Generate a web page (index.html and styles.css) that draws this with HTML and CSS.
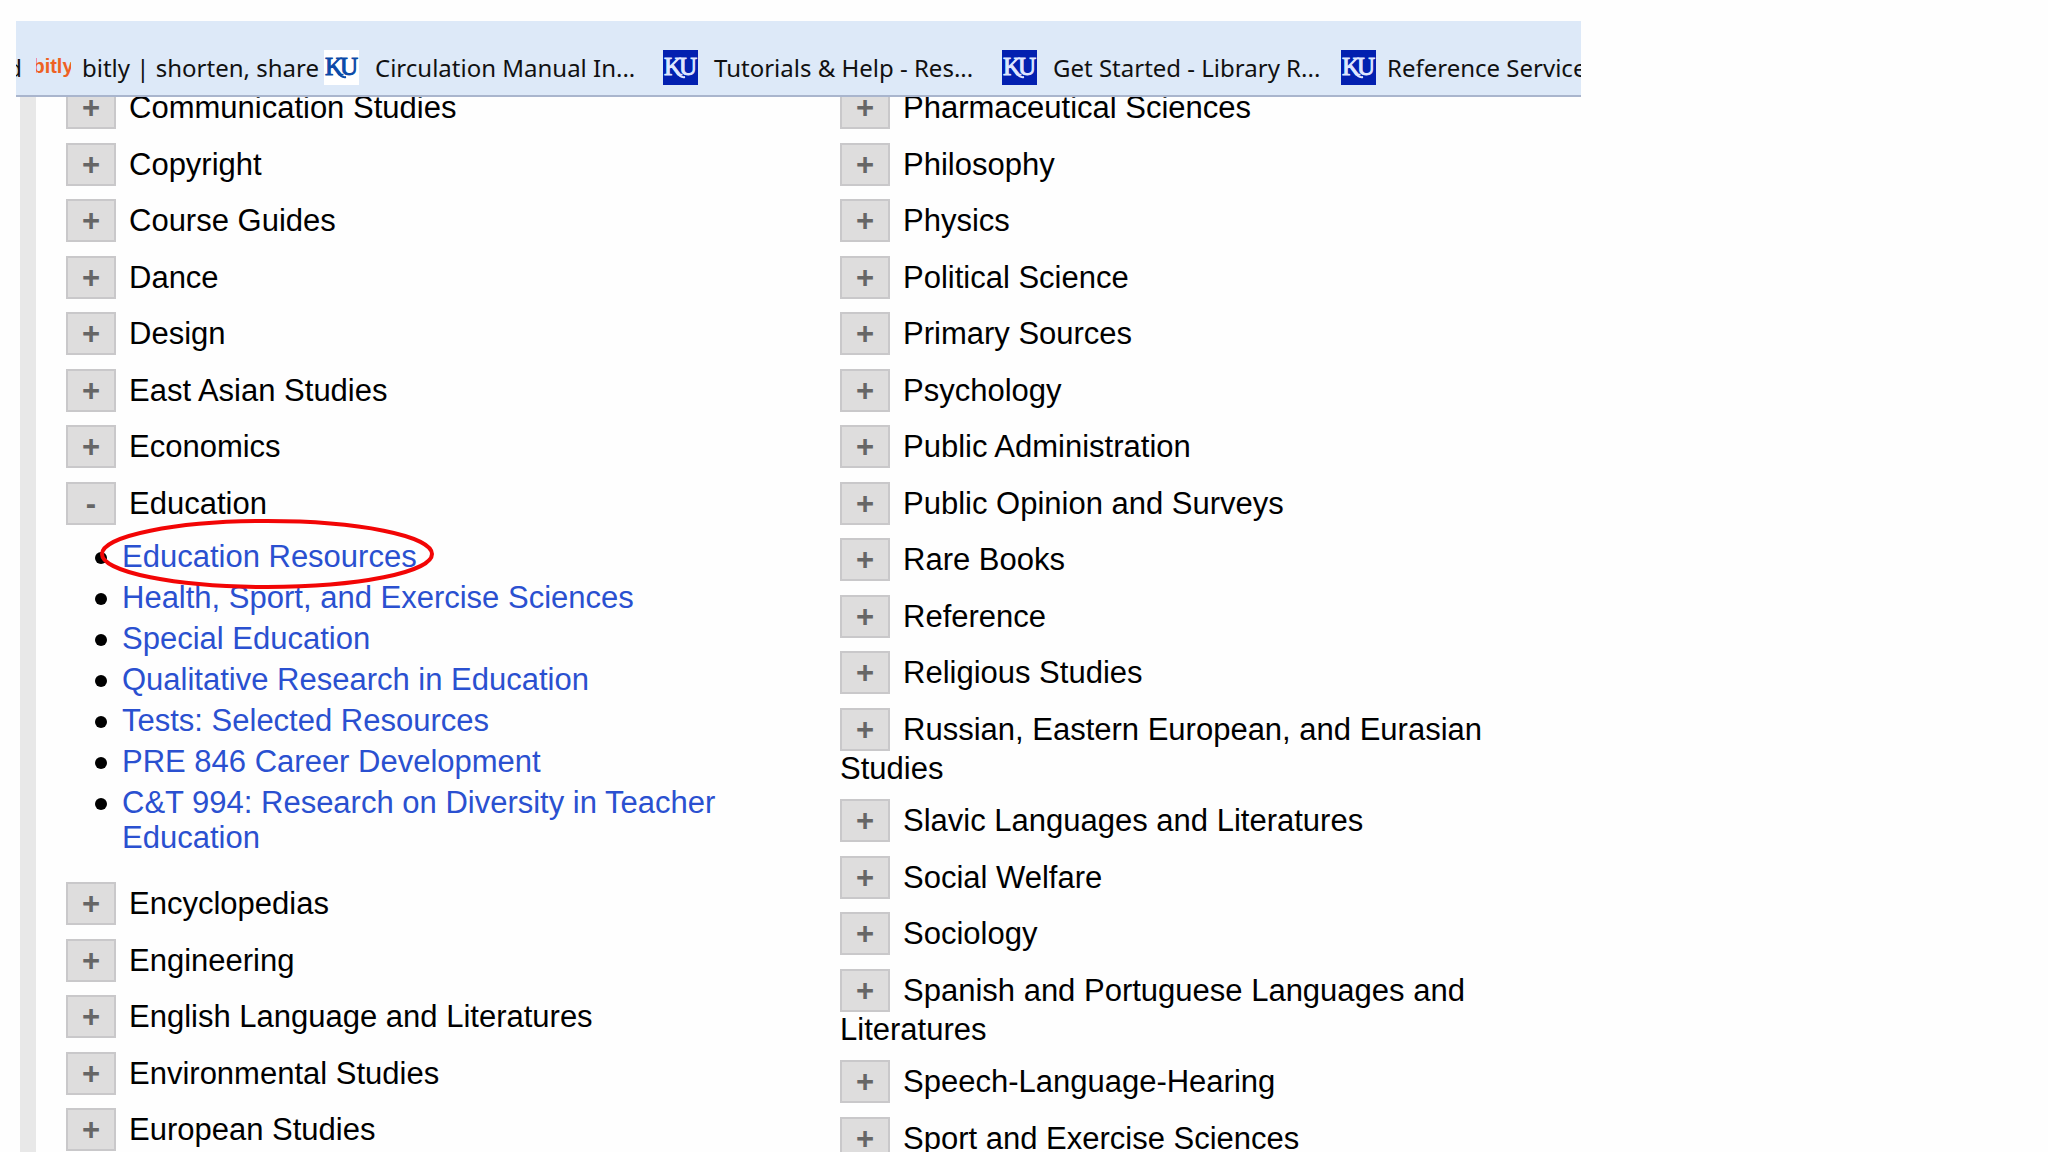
FILE: index.html
```
<!DOCTYPE html>
<html lang="en">
<head>
  <meta charset="UTF-8">
  <title>Research Guides by Subject</title>
  <link rel="stylesheet" href="styles.css">
</head>
<body>
  <div class="window">
    <nav class="bookmarks">
      <a class="bookmark cut" href="#">d</a>
      <a class="bookmark short" href="#">
        <svg class="favicon" viewBox="0 0 35 35" aria-hidden="true">
          <text class="bitly" x="17" y="23" text-anchor="middle">bitly</text>
        </svg>
        <span>bitly | shorten, share</span>
      </a>
      <a class="bookmark" href="#">
        <svg class="favicon" viewBox="0 0 35 35" aria-hidden="true">
          <rect width="35" height="35" fill="#fff"/>
          <g fill="#0a4aa8" stroke="#0a4aa8">
            <text class="ku" x="1" y="25">K</text>
            <text class="ku" x="16" y="25">U</text>
            <path d="M14 22 Q17 28 22 27" fill="none" stroke-width="2"/>
          </g>
        </svg>
        <span>Circulation Manual In...</span>
      </a>
      <a class="bookmark" href="#">
        <svg class="favicon" viewBox="0 0 35 35" aria-hidden="true">
          <rect width="35" height="35" fill="#0320b0"/>
          <g fill="#dfe6ff" stroke="#dfe6ff">
            <text class="ku" x="1" y="25">K</text>
            <text class="ku" x="16" y="25">U</text>
            <path d="M14 22 Q17 28 22 27" fill="none" stroke-width="2"/>
          </g>
        </svg>
        <span>Tutorials &amp; Help - Res...</span>
      </a>
      <a class="bookmark" href="#">
        <svg class="favicon" viewBox="0 0 35 35" aria-hidden="true">
          <rect width="35" height="35" fill="#0320b0"/>
          <g fill="#dfe6ff" stroke="#dfe6ff">
            <text class="ku" x="1" y="25">K</text>
            <text class="ku" x="16" y="25">U</text>
            <path d="M14 22 Q17 28 22 27" fill="none" stroke-width="2"/>
          </g>
        </svg>
        <span>Get Started - Library R...</span>
      </a>
      <a class="bookmark short" href="#">
        <svg class="favicon" viewBox="0 0 35 35" aria-hidden="true">
          <rect width="35" height="35" fill="#0320b0"/>
          <g fill="#dfe6ff" stroke="#dfe6ff">
            <text class="ku" x="1" y="25">K</text>
            <text class="ku" x="16" y="25">U</text>
            <path d="M14 22 Q17 28 22 27" fill="none" stroke-width="2"/>
          </g>
        </svg>
        <span>Reference Service</span>
      </a>
    </nav>

    <main class="guides">
      <ul class="subjects">
        <li><button class="toggle">+</button>Communication Studies</li>
        <li><button class="toggle">+</button>Copyright</li>
        <li><button class="toggle">+</button>Course Guides</li>
        <li><button class="toggle">+</button>Dance</li>
        <li><button class="toggle">+</button>Design</li>
        <li><button class="toggle">+</button>East Asian Studies</li>
        <li><button class="toggle">+</button>Economics</li>
        <li>
          <button class="toggle">-</button>Education
          <ul class="links">
            <li class="marked">
              <a href="#">Education Resources</a>
              <svg class="circle" viewBox="0 0 335 70" aria-hidden="true">
                <ellipse cx="167" cy="35" rx="165" ry="33" fill="none" stroke="#f20505" stroke-width="4"/>
              </svg>
            </li>
            <li><a href="#">Health, Sport, and Exercise Sciences</a></li>
            <li><a href="#">Special Education</a></li>
            <li><a href="#">Qualitative Research in Education</a></li>
            <li><a href="#">Tests: Selected Resources</a></li>
            <li><a href="#">PRE 846 Career Development</a></li>
            <li><a href="#">C&amp;T 994: Research on Diversity in Teacher Education</a></li>
          </ul>
        </li>
        <li><button class="toggle">+</button>Encyclopedias</li>
        <li><button class="toggle">+</button>Engineering</li>
        <li><button class="toggle">+</button>English Language and Literatures</li>
        <li><button class="toggle">+</button>Environmental Studies</li>
        <li><button class="toggle">+</button>European Studies</li>
      </ul>

      <ul class="subjects">
        <li><button class="toggle">+</button>Pharmaceutical Sciences</li>
        <li><button class="toggle">+</button>Philosophy</li>
        <li><button class="toggle">+</button>Physics</li>
        <li><button class="toggle">+</button>Political Science</li>
        <li><button class="toggle">+</button>Primary Sources</li>
        <li><button class="toggle">+</button>Psychology</li>
        <li><button class="toggle">+</button>Public Administration</li>
        <li><button class="toggle">+</button>Public Opinion and Surveys</li>
        <li><button class="toggle">+</button>Rare Books</li>
        <li><button class="toggle">+</button>Reference</li>
        <li><button class="toggle">+</button>Religious Studies</li>
        <li><button class="toggle">+</button>Russian, Eastern European, and Eurasian Studies</li>
        <li><button class="toggle">+</button>Slavic Languages and Literatures</li>
        <li><button class="toggle">+</button>Social Welfare</li>
        <li><button class="toggle">+</button>Sociology</li>
        <li><button class="toggle">+</button>Spanish and Portuguese Languages and Literatures</li>
        <li><button class="toggle">+</button>Speech-Language-Hearing</li>
        <li><button class="toggle">+</button>Sport and Exercise Sciences</li>
      </ul>
    </main>
  </div>
</body>
</html>
```

FILE: styles.css
```
* {
  box-sizing: border-box;
}
body {
  margin: 0;
  background: #fefefe;
  color: #000;
  font-family: "Liberation Sans", Arial, sans-serif;
  font-size: 31px;
  line-height: 35px;
}
ul {
  list-style: none;
  margin: 0;
  padding: 0;
}
.window {
  display: flex;
  flex-direction: column;
  max-width: 1581px;
  height: 100vh;
  padding: 21px 0 0 16px;
  overflow: hidden;
}

/* bookmarks bar */
.bookmarks {
  position: relative;
  z-index: 1;
  display: flex;
  flex-shrink: 0;
  height: 76px;
  padding-top: 18px;
  overflow: hidden;
  background: #dde9f8;
  border-bottom: 2px solid #a9b5cd;
}
.bookmark {
  display: flex;
  flex: 0 0 339px;
  align-items: center;
  gap: 16px;
  color: #111;
  font-family: "Noto Sans", "Open Sans", sans-serif;
  font-size: 24px;
  text-decoration: none;
  white-space: nowrap;
}
.bookmark.short {
  flex-basis: 288px;
  gap: 11px;
}
.bookmark.cut {
  flex-basis: 20px;
  min-width: 0;
  justify-content: flex-end;
  padding-right: 14px;
}
.favicon {
  width: 35px;
  height: 35px;
  flex-shrink: 0;
}
.ku {
  font: 25px "Liberation Serif", serif;
}
.bitly {
  font: bold 20px "Liberation Sans", sans-serif;
  fill: #ee6123;
}

/* subject lists */
.guides {
  display: grid;
  flex: 1 0 auto;
  grid-template-columns: 1fr 1fr;
  column-gap: 33px;
  margin-left: 4px;
  padding-left: 30px;
  border-left: 16px solid #e8e8e8;
}
.subjects {
  margin-top: -11px;
}
.subjects > li {
  margin-bottom: 14px;
}
.subjects > li:nth-child(even) {
  margin-bottom: 13px;
}
.toggle {
  width: 50px;
  height: 43px;
  margin: 0 13px 0 0;
  padding: 0;
  border: 2px solid #c9c8ca;
  background: #dedddd;
  color: #666;
  font: bold 31px/39px "Liberation Sans", Arial, sans-serif;
  cursor: pointer;
}
.links {
  margin: 14px 0 27px;
  padding-left: 56px;
}
.links li {
  position: relative;
  margin-bottom: 6px;
}
.links li::before {
  content: "";
  position: absolute;
  left: -27px;
  top: 13px;
  width: 12px;
  height: 12px;
  border-radius: 50%;
  background: #000;
}
.links a {
  color: #2a50d0;
  text-decoration: none;
}
.circle {
  position: absolute;
  left: -22px;
  top: -20px;
  z-index: 1;
  width: 335px;
  height: 70px;
}
```
